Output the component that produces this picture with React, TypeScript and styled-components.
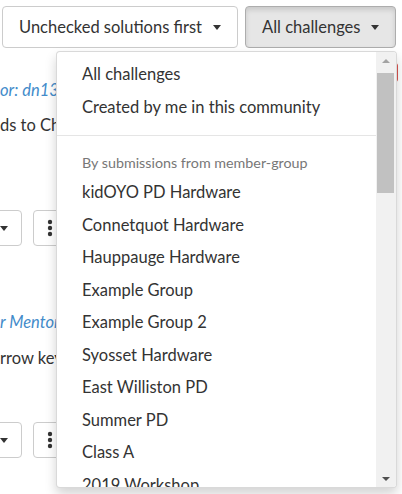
import React from "react";
import styled, { createGlobalStyle } from "styled-components";

const FONT = `Lato, "Noto Sans", sans-serif`;

const GlobalStyle = createGlobalStyle`
  html, body { margin: 0; padding: 0; background: #fff; }
  body { font-family: ${FONT}; color: #333; }
  * { box-sizing: border-box; }
`;

const Page = styled.div`
  position: relative;
  width: 402px;
  height: 494px;
  overflow: hidden;
  background: #fff;
`;

const Toolbar = styled.div`
  display: flex;
  gap: 7px;
  padding: 6px 0 0 2px;
`;

const SortButton = styled.button<{ $active?: boolean; $width: number }>`
  display: flex;
  align-items: center;
  justify-content: space-between;
  width: ${(p) => p.$width}px;
  height: 42px;
  padding: 0 16px;
  font-family: ${FONT};
  font-size: 16.5px;
  color: #333;
  border-radius: 4px;
  border: 1px solid ${(p) => (p.$active ? "#adadad" : "#ccc")};
  background: ${(p) => (p.$active ? "#e6e6e6" : "#fff")};
  box-shadow: ${(p) => (p.$active ? "inset 0 3px 5px rgba(0,0,0,.125)" : "none")};
`;

const Caret = styled.span`
  display: inline-block;
  width: 0;
  height: 0;
  border-top: 5px solid #333;
  border-left: 4.5px solid transparent;
  border-right: 4.5px solid transparent;
`;

const Content = styled.div`
  display: flex;
  flex-direction: column;
  width: 56px;
  overflow: hidden;
  padding-top: 31px;
  padding-left: 40px;
  margin-left: -40px;
  box-sizing: content-box;
`;

const Card = styled.div<{ $top: number }>`
  display: flex;
  flex-direction: column;
  margin-top: ${(p) => p.$top}px;
  margin-left: -40px;
`;

const Badge = styled.span`
  position: absolute;
  top: 63px;
  right: 4px;
  width: 60px;
  height: 19px;
  border-radius: 3px;
  background: #d9534f;
`;

const Meta = styled.div`
  padding-left: 40px;
  font-size: 16.5px;
  line-height: 22px;
  font-style: italic;
  color: #428bca;
  white-space: nowrap;
`;

const Desc = styled.div<{ $top: number }>`
  margin-top: ${(p) => p.$top}px;
  padding-left: 40px;
  font-size: 16.5px;
  line-height: 22px;
  color: #333;
  white-space: nowrap;
`;

const Actions = styled.div<{ $top: number }>`
  display: flex;
  gap: 11px;
  margin-top: ${(p) => p.$top}px;
`;

const SplitButton = styled.div`
  display: flex;
  align-items: center;
  justify-content: flex-end;
  flex: none;
  width: 62px;
  height: 36px;
  padding-right: 13px;
  border: 1px solid #ccc;
  border-radius: 4px;
  background: #fff;
`;

const KebabButton = styled.div`
  display: flex;
  align-items: center;
  flex: none;
  width: 36px;
  height: 36px;
  padding-left: 13px;
  border: 1px solid #ccc;
  border-radius: 4px;
  background: #fff;
`;

const Menu = styled.div`
  position: absolute;
  top: 51px;
  left: 56px;
  width: 341px;
  height: 437px;
  display: flex;
  border: 1px solid rgba(0, 0, 0, 0.15);
  border-radius: 4px;
  background: #fff;
  box-shadow: 0 6px 12px rgba(0, 0, 0, 0.175);
  overflow: hidden;
`;

const MenuList = styled.ul`
  list-style: none;
  margin: 0;
  padding: 6px 0 0;
  width: 319px;
  overflow: hidden;
`;

const MenuItem = styled.li`
  display: flex;
  align-items: center;
  height: 32.5px;
  padding-left: 25px;
  font-size: 16.5px;
  color: #333;
  white-space: nowrap;
`;

const Divider = styled.li`
  height: 1px;
  margin: 12px 0;
  background: #e5e5e5;
`;

const MenuHeader = styled.li`
  display: flex;
  align-items: center;
  height: 28px;
  padding-left: 25px;
  font-size: 14.3px;
  color: #777;
  white-space: nowrap;
`;

const Scrollbar = styled.div`
  display: flex;
  flex-direction: column;
  width: 20px;
  background: #f1f1f1;
`;

const ScrollButton = styled.div`
  display: flex;
  align-items: center;
  justify-content: center;
  height: 17px;
  padding-right: 1px;
`;

const Arrow = styled.span<{ $down?: boolean }>`
  width: 0;
  height: 0;
  border-left: 4px solid transparent;
  border-right: 4px solid transparent;
  ${(p) =>
    p.$down
      ? "border-top: 4px solid #505050;"
      : "border-bottom: 4px solid #a3a3a3;"}
`;

const Thumb = styled.div`
  height: 120px;
  margin: 4px 2px 0 1px;
  background: #c1c1c1;
`;

const Spacer = styled.div`
  flex: 1;
`;

const Dots = () => (
  <svg width="6" height="18" viewBox="0 0 6 18">
    <circle cx="3" cy="3" r="2.2" fill="#333" />
    <circle cx="3" cy="9" r="2.2" fill="#333" />
    <circle cx="3" cy="15" r="2.2" fill="#333" />
  </svg>
);

const groups = [
  "kidOYO PD Hardware",
  "Connetquot Hardware",
  "Hauppauge Hardware",
  "Example Group",
  "Example Group 2",
  "Syosset Hardware",
  "East Williston PD",
  "Summer PD",
  "Class A",
  "2019 Workshop",
];

export default function App() {
  return (
    <>
      <GlobalStyle />
      <Page>
        <Toolbar>
          <SortButton $width={236}>
            Unchecked solutions first <Caret />
          </SortButton>
          <SortButton $width={151} $active>
            All challenges <Caret />
          </SortButton>
        </Toolbar>

        <Content>
          <Card $top={0}>
            <Meta>or: dn13</Meta>
            <Desc $top={13}>ds to Ch</Desc>
            <Actions $top={74}>
              <SplitButton>
                <Caret />
              </SplitButton>
              <KebabButton>
                <Dots />
              </KebabButton>
            </Actions>
          </Card>
          <Card $top={65}>
            <Meta>r Mentor</Meta>
            <Desc $top={14}>rrow key</Desc>
            <Actions $top={53}>
              <SplitButton>
                <Caret />
              </SplitButton>
              <KebabButton>
                <Dots />
              </KebabButton>
            </Actions>
          </Card>
        </Content>

        <Badge />

        <Menu>
          <MenuList>
            <MenuItem>All challenges</MenuItem>
            <MenuItem>Created by me in this community</MenuItem>
            <Divider />
            <MenuHeader>By submissions from member-group</MenuHeader>
            {groups.map((g) => (
              <MenuItem key={g}>{g}</MenuItem>
            ))}
          </MenuList>
          <Scrollbar>
            <ScrollButton>
              <Arrow />
            </ScrollButton>
            <Thumb />
            <Spacer />
            <ScrollButton>
              <Arrow $down />
            </ScrollButton>
          </Scrollbar>
        </Menu>
      </Page>
    </>
  );
}
